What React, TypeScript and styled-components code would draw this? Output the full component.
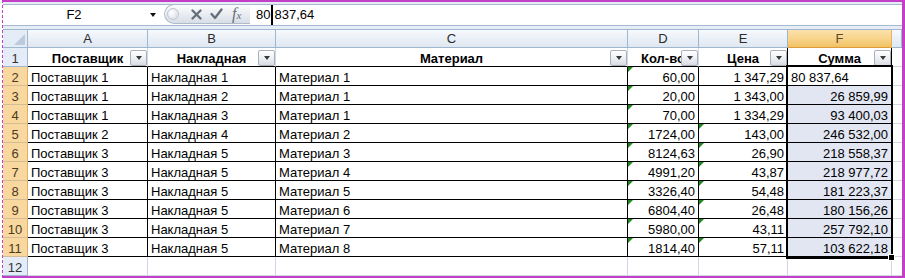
import React from "react";
import styled, { createGlobalStyle, css } from "styled-components";

const MAGENTA = "#c43fc8";
const GRID = "#d0d7e5";
const HEAD_BORDER = "#9eb6ce";
const BLACK = "#000";

const GlobalStyle = createGlobalStyle`
  html, body { margin: 0; padding: 0; background: #fff; }
  body { font-family: "Liberation Sans", Arial, sans-serif; font-size: 13px; color: #000; }
`;

const Frame = styled.div`
  box-sizing: border-box;
  width: 903px;
  height: 278px;
  margin-left: 2px;
  border-top: 2px solid ${MAGENTA};
  border-right: 3px solid ${MAGENTA};
  border-bottom: 2px solid ${MAGENTA};
  border-left: 1px dashed ${MAGENTA};
  display: flex;
  flex-direction: column;
  overflow: hidden;
`;

const FormulaBar = styled.div`
  box-sizing: border-box;
  height: 27px;
  padding: 2px 0 3px;
  background: #e6edf6;
  display: flex;
`;

const BarInner = styled.div`
  flex: 1;
  display: flex;
  box-sizing: border-box;
  height: 22px;
  border-top: 1px solid #a7b9cf;
  border-bottom: 1px solid #a7b9cf;
  background: #fff;
`;

const NameBox = styled.div`
  width: 158px;
  display: flex;
  align-items: center;
`;

const NameText = styled.div`
  flex: 1;
  text-align: center;
  line-height: 18px;
`;

const NameArrow = styled.div`
  width: 16px;
  display: flex;
  justify-content: center;
  align-items: center;
  &::after {
    content: "";
    border-left: 3.5px solid transparent;
    border-right: 3.5px solid transparent;
    border-top: 4px solid #111;
  }
`;

const Pill = styled.div`
  box-sizing: border-box;
  width: 86px;
  height: 20px;
  margin-top: -1px;
  margin-left: 3px;
  border: 1px solid #aebbcb;
  border-right: none;
  border-radius: 10px 0 0 10px;
  background: linear-gradient(#fbfcfd, #e8ecf1 55%, #d8dee6);
  display: flex;
  align-items: center;
`;

const Grip = styled.span`
  width: 10px;
  height: 10px;
  margin-left: 2px;
  border-radius: 50%;
  border: 1px solid #bcc5d1;
  background: radial-gradient(circle at 35% 35%, #ffffff, #d3d9e2);
`;

const IconSlot = styled.span<{ $ml: number }>`
  display: flex;
  align-items: center;
  margin-left: ${(p) => p.$ml}px;
`;

const Fx = styled.span`
  margin-left: 9px;
  font-family: "Liberation Serif", "Times New Roman", serif;
  font-style: italic;
  font-size: 16px;
  color: #646c79;
  line-height: 16px;
  & > small {
    font-size: 11px;
  }
`;

const FormulaInput = styled.div`
  flex: 1;
  display: flex;
  align-items: center;
  padding-left: 6px;
  line-height: 18px;
  white-space: pre;
`;

const Caret = styled.span`
  display: inline-block;
  width: 2px;
  height: 20px;
  margin: 0 1px;
  background: #000;
`;

const Sheet = styled.div`
  position: relative;
  flex: 1;
  display: grid;
  grid-template-columns: 25px 120px 128px 352px 71px 89px 104px 1fr;
  grid-template-rows: 18px repeat(12, 19px);
  border-top: 1px solid ${HEAD_BORDER};
  overflow: hidden;
`;

const Corner = styled.div`
  position: relative;
  box-sizing: border-box;
  background: #e4ecf7;
  border-right: 1px solid ${HEAD_BORDER};
  border-bottom: 1px solid ${HEAD_BORDER};
  &::after {
    content: "";
    position: absolute;
    right: 2px;
    bottom: 2px;
    border-left: 11px solid transparent;
    border-bottom: 11px solid #bccadb;
  }
`;

const ColHead = styled.div<{ $sel?: boolean }>`
  box-sizing: border-box;
  display: flex;
  align-items: center;
  justify-content: center;
  line-height: 18px;
  color: #2b2b2b;
  border-right: 1px solid ${HEAD_BORDER};
  border-bottom: 1px solid ${HEAD_BORDER};
  background: linear-gradient(#f8fafd, #eaf0f7 50%, #dfe7f1);
  ${(p) =>
    p.$sel &&
    css`
      background: linear-gradient(#fbe2ad, #f8d48c 50%, #f2c264);
      border-right-color: #e6b25c;
      border-bottom-color: #e19c3a;
      color: #5a4a2a;
    `}
`;

const RowHead = styled.div<{ $sel?: boolean }>`
  box-sizing: border-box;
  display: flex;
  align-items: flex-end;
  justify-content: center;
  line-height: 14px;
  color: #333;
  background: #e4ecf7;
  border-right: 1px solid ${HEAD_BORDER};
  border-bottom: 1px solid ${HEAD_BORDER};
  ${(p) =>
    p.$sel &&
    css`
      background: #f9d8a0;
      border-right-color: #e2ae5e;
      border-bottom-color: #d4bc98;
      color: #4a3a20;
    `}
`;

type Align = "left" | "right" | "center";

const Cell = styled.div<{
  $align?: Align;
  $bold?: boolean;
  $right?: string;
  $bottom?: string;
  $fill?: string;
  $flag?: boolean;
}>`
  position: relative;
  box-sizing: border-box;
  display: flex;
  align-items: flex-end;
  justify-content: ${(p) =>
    p.$align === "right" ? "flex-end" : p.$align === "center" ? "center" : "flex-start"};
  padding: 0 3px 0 3px;
  line-height: 14px;
  white-space: nowrap;
  overflow: hidden;
  font-weight: ${(p) => (p.$bold ? 700 : 400)};
  background: ${(p) => p.$fill ?? "#fff"};
  border-right: ${(p) => (p.$right === "none" ? "none" : `1px solid ${p.$right ?? GRID}`)};
  border-bottom: 1px solid ${(p) => p.$bottom ?? GRID};
  ${(p) =>
    p.$flag &&
    css`
      &::before {
        content: "";
        position: absolute;
        top: 0;
        left: 0;
        border-top: 5px solid #1d8b1d;
        border-right: 5px solid transparent;
      }
    `}
`;

const FilterBtn = styled.span`
  position: absolute;
  right: 0;
  bottom: 0;
  box-sizing: border-box;
  width: 17px;
  height: 16px;
  border: 1px solid #a9b0ba;
  border-radius: 2px;
  background: linear-gradient(#ffffff, #eceff3 55%, #d9dde3);
  display: flex;
  align-items: center;
  justify-content: center;
  &::after {
    content: "";
    border-left: 3.5px solid transparent;
    border-right: 3.5px solid transparent;
    border-top: 4px solid #3a3a3a;
  }
`;

const Selection = styled.div`
  position: absolute;
  left: 783px;
  top: 35px;
  width: 107px;
  height: 194px;
  box-sizing: border-box;
  border: 2px solid #000;
  pointer-events: none;
`;

const FillHandle = styled.div`
  position: absolute;
  right: -4px;
  bottom: -4px;
  width: 5px;
  height: 5px;
  background: #000;
  border: 1px solid #fff;
`;

const headers = ["Поставщик", "Накладная", "Материал", "Кол-во", "Цена", "Сумма"];
const letters = ["A", "B", "C", "D", "E", "F"];

const rows: string[][] = [
  ["Поставщик 1", "Накладная 1", "Материал 1", "60,00", "1 347,29", "80 837,64"],
  ["Поставщик 1", "Накладная 2", "Материал 1", "20,00", "1 343,00", "26 859,99"],
  ["Поставщик 1", "Накладная 3", "Материал 1", "70,00", "1 334,29", "93 400,03"],
  ["Поставщик 2", "Накладная 4", "Материал 2", "1724,00", "143,00", "246 532,00"],
  ["Поставщик 3", "Накладная 5", "Материал 3", "8124,63", "26,90", "218 558,37"],
  ["Поставщик 3", "Накладная 5", "Материал 4", "4991,20", "43,87", "218 977,72"],
  ["Поставщик 3", "Накладная 5", "Материал 5", "3326,40", "54,48", "181 223,37"],
  ["Поставщик 3", "Накладная 5", "Материал 6", "6804,40", "26,48", "180 156,26"],
  ["Поставщик 3", "Накладная 5", "Материал 7", "5980,00", "43,11", "257 792,10"],
  ["Поставщик 3", "Накладная 5", "Материал 8", "1814,40", "57,11", "103 622,18"],
];

const XIcon = () => (
  <svg width="11" height="11" viewBox="0 0 11 11">
    <path d="M1.5 1.5 L9.5 9.5 M9.5 1.5 L1.5 9.5" stroke="#666e7b" strokeWidth="2.3" strokeLinecap="round" />
  </svg>
);

const CheckIcon = () => (
  <svg width="13" height="12" viewBox="0 0 13 12">
    <path d="M1.5 6 L5 10 L11.5 1.5" stroke="#666e7b" strokeWidth="2.3" fill="none" strokeLinecap="round" strokeLinejoin="round" />
  </svg>
);

export default function App() {
  return (
    <>
      <GlobalStyle />
      <Frame>
        <FormulaBar>
          <BarInner>
            <NameBox>
              <NameText>F2</NameText>
              <NameArrow />
            </NameBox>
            <Pill>
              <Grip />
              <IconSlot $ml={12}>
                <XIcon />
              </IconSlot>
              <IconSlot $ml={8}>
                <CheckIcon />
              </IconSlot>
              <Fx>
                f<small>x</small>
              </Fx>
            </Pill>
            <FormulaInput>
              80
              <Caret />
              837,64
            </FormulaInput>
          </BarInner>
        </FormulaBar>
        <Sheet>
          <Corner />
          {letters.map((l) => (
            <ColHead key={l} $sel={l === "F"}>
              {l}
            </ColHead>
          ))}
          <ColHead />

          <RowHead>1</RowHead>
          {headers.map((h, i) => (
            <Cell
              key={h}
              $align="center"
              $bold
              $bottom={BLACK}
              $right={i >= 4 ? BLACK : GRID}
            >
              {h}
              <FilterBtn />
            </Cell>
          ))}
          <Cell $right="none" />

          {rows.map((r, ri) => (
            <React.Fragment key={ri}>
              <RowHead $sel>{ri + 2}</RowHead>
              {r.map((v, ci) => (
                <Cell
                  key={ci}
                  $align={ci >= 3 && !(ci === 5 && ri === 0) ? "right" : "left"}
                  $right={BLACK}
                  $bottom={BLACK}
                  $fill={ci === 5 && ri > 0 ? "#e2e6f2" : undefined}
                  $flag={ci === 3 || (ci === 4 && ri >= 3)}
                >
                  {v}
                </Cell>
              ))}
              <Cell $right="none" />
            </React.Fragment>
          ))}

          <RowHead>12</RowHead>
          {letters.map((l) => (
            <Cell key={l} />
          ))}
          <Cell $right="none" />

          <Selection>
            <FillHandle />
          </Selection>
        </Sheet>
      </Frame>
    </>
  );
}
